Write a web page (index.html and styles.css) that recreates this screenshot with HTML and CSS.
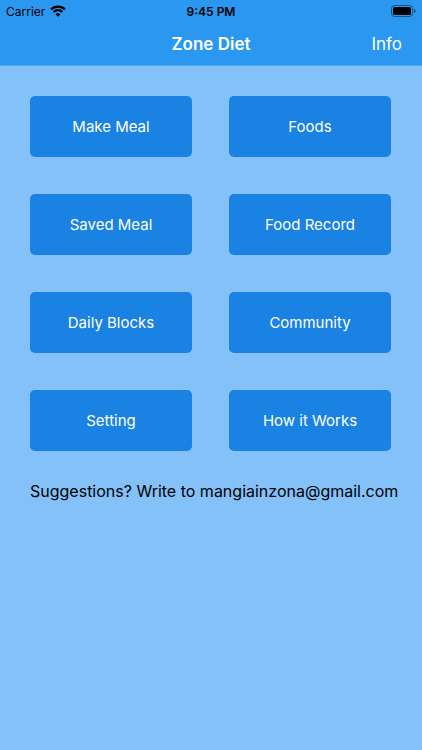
FILE: index.html
```html
<!DOCTYPE html>
<html lang="en">
<head>
  <meta charset="UTF-8">
  <meta name="viewport" content="width=device-width, initial-scale=1.0">
  <title>Zone Diet</title>
  <link rel="stylesheet" href="styles.css">
</head>
<body>

  <!-- Header -->
  <header class="header">
    <div class="status-bar">
      <div class="carrier">
        <span>Carrier</span>
        <svg class="wifi-icon" viewBox="0 0 16 12" aria-hidden="true">
          <path d="M1 4.4a10 10 0 0 1 14 0" fill="none" stroke="#000" stroke-width="2.2"/>
          <path d="M3.5 7a6.4 6.4 0 0 1 9 0" fill="none" stroke="#000" stroke-width="2.1"/>
          <path d="M5.6 9.3a3.4 3.4 0 0 1 4.8 0L8 11.8z"/>
        </svg>
      </div>
      <div class="clock">9:45 PM</div>
      <div class="battery">
        <svg class="battery-icon" viewBox="0 0 25 12" aria-hidden="true">
          <rect x="0.5" y="0.5" width="21" height="11" rx="3" fill="none" stroke="#000" stroke-opacity="0.45"/>
          <rect x="2" y="2" width="18" height="8" rx="1.5"/>
          <path d="M23 4v4c1-.4 1.500-1.100 1.500-2S24 4.400 23 4z" fill-opacity="0.5"/>
        </svg>
      </div>
    </div>
    <nav class="nav-bar">
      <h1 class="nav-title">Zone Diet</h1>
      <a href="#" class="nav-link">Info</a>
    </nav>
  </header>

  <!-- Main Content -->
  <main class="main-content">
    <div class="menu-grid">
      <button class="menu-button">Make Meal</button>
      <button class="menu-button">Foods</button>
      <button class="menu-button">Saved Meal</button>
      <button class="menu-button">Food Record</button>
      <button class="menu-button">Daily Blocks</button>
      <button class="menu-button">Community</button>
      <button class="menu-button">Setting</button>
      <button class="menu-button">How it Works</button>
    </div>
    <p class="info-text">Suggestions? Write to mangiainzona@gmail.com</p>
  </main>

</body>
</html>
```

FILE: styles.css
```css
* {
  margin: 0;
  padding: 0;
  box-sizing: border-box;
}

body {
  font-family: Inter, Roboto, "Liberation Sans", sans-serif;
  background: #84c1f9;
  min-height: 100vh;
  color: #000;
}

/* Header */
.header {
  background: #2a98f0;
  border-bottom: 1px solid #4aa5f2;
}

.status-bar {
  display: grid;
  grid-template-columns: 1fr auto 1fr;
  align-items: center;
  height: 22px;
  padding: 0 6px;
  font-size: 12px;
}

.carrier {
  display: flex;
  align-items: center;
  gap: 5px;
}

.wifi-icon {
  width: 16px;
  height: 12px;
}

.clock {
  font-weight: 600;
}

.battery {
  display: flex;
  justify-content: flex-end;
}

.battery-icon {
  width: 25px;
  height: 12px;
}

.nav-bar {
  display: grid;
  grid-template-columns: 1fr auto 1fr;
  align-items: center;
  height: 43px;
  padding: 0 20px;
}

.nav-title {
  grid-column: 2;
  font-size: 17px;
  font-weight: 600;
  color: white;
}

.nav-link {
  justify-self: end;
  font-size: 17px;
  color: white;
  text-decoration: none;
}

/* Menu */
.main-content {
  padding: 30px 0;
}

.menu-grid {
  display: grid;
  grid-template-columns: 1fr 1fr;
  gap: 37px;
  padding: 0 31px 0 30px;
  margin-bottom: 30px;
}

.menu-button {
  height: 61px;
  border: none;
  border-radius: 5px;
  background: #1a82e2;
  color: white;
  font-family: inherit;
  font-size: 15px;
  cursor: pointer;
}

.info-text {
  padding: 0 16px 0 30px;
  font-size: 16px;
  line-height: 20px;
}
```
